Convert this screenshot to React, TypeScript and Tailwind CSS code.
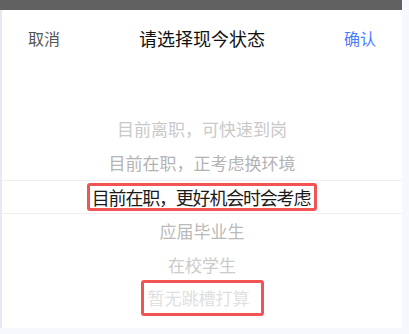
import React from "react";

export default function App() {
  const items = [
    { text: "目前离职，可快速到岗", color: "text-[#c9c9c9]" },
    { text: "目前在职，正考虑换环境", color: "text-[#b3b3b3]" },
    { text: "目前在职，更好机会时会考虑", selected: true },
    { text: "应届毕业生", color: "text-[#bababa]" },
    { text: "在校学生", color: "text-[#cbcbcb]" },
    { text: "暂无跳槽打算", color: "text-[#e0e0e0]", boxed: true },
  ];

  return (
    <div
      className="w-[409px] h-[334px] bg-[#f7f8fd] flex flex-col"
      style={{ fontFamily: '"Noto Sans CJK SC", "Noto Sans", sans-serif' }}
    >
      <div className="w-[402px] h-[10px] bg-[#616161]" />
      <div className="flex">
        <div className="w-[2px] h-[318px] bg-[#e6e9f0]" />
        <div className="w-[400px] h-[318px] bg-white flex flex-col">
          <div className="h-[56px] px-[26px] flex items-center justify-between">
            <span className="text-[16px] text-[#555555]">取消</span>
            <span className="text-[18px] text-[#111111]">请选择现今状态</span>
            <span className="text-[16px] text-[#4a7dff]">确认</span>
          </div>
          <ul className="pt-[46px]">
            {items.map((item) =>
              item.selected ? (
                <li
                  key={item.text}
                  className="h-[34px] flex items-center justify-center border-y border-[#eeeeee]"
                >
                  <span className="border-[3px] border-[#f25353] rounded-[3px] pl-[2px] pr-[4px] h-[28px] flex items-center text-[18px] tracking-[-1.2px] text-[#1a1a1a]">
                    {item.text}
                  </span>
                </li>
              ) : (
                <li
                  key={item.text}
                  className={`h-[34px] flex items-center justify-center text-[17px] ${item.color}`}
                >
                  {item.boxed ? (
                    <span className="border-[3px] border-[#f25353] rounded-[3px] pl-[4px] pr-[11px] h-[36px] -mt-[3px] flex items-center">
                      {item.text}
                    </span>
                  ) : (
                    item.text
                  )}
                </li>
              )
            )}
          </ul>
        </div>
      </div>
    </div>
  );
}
